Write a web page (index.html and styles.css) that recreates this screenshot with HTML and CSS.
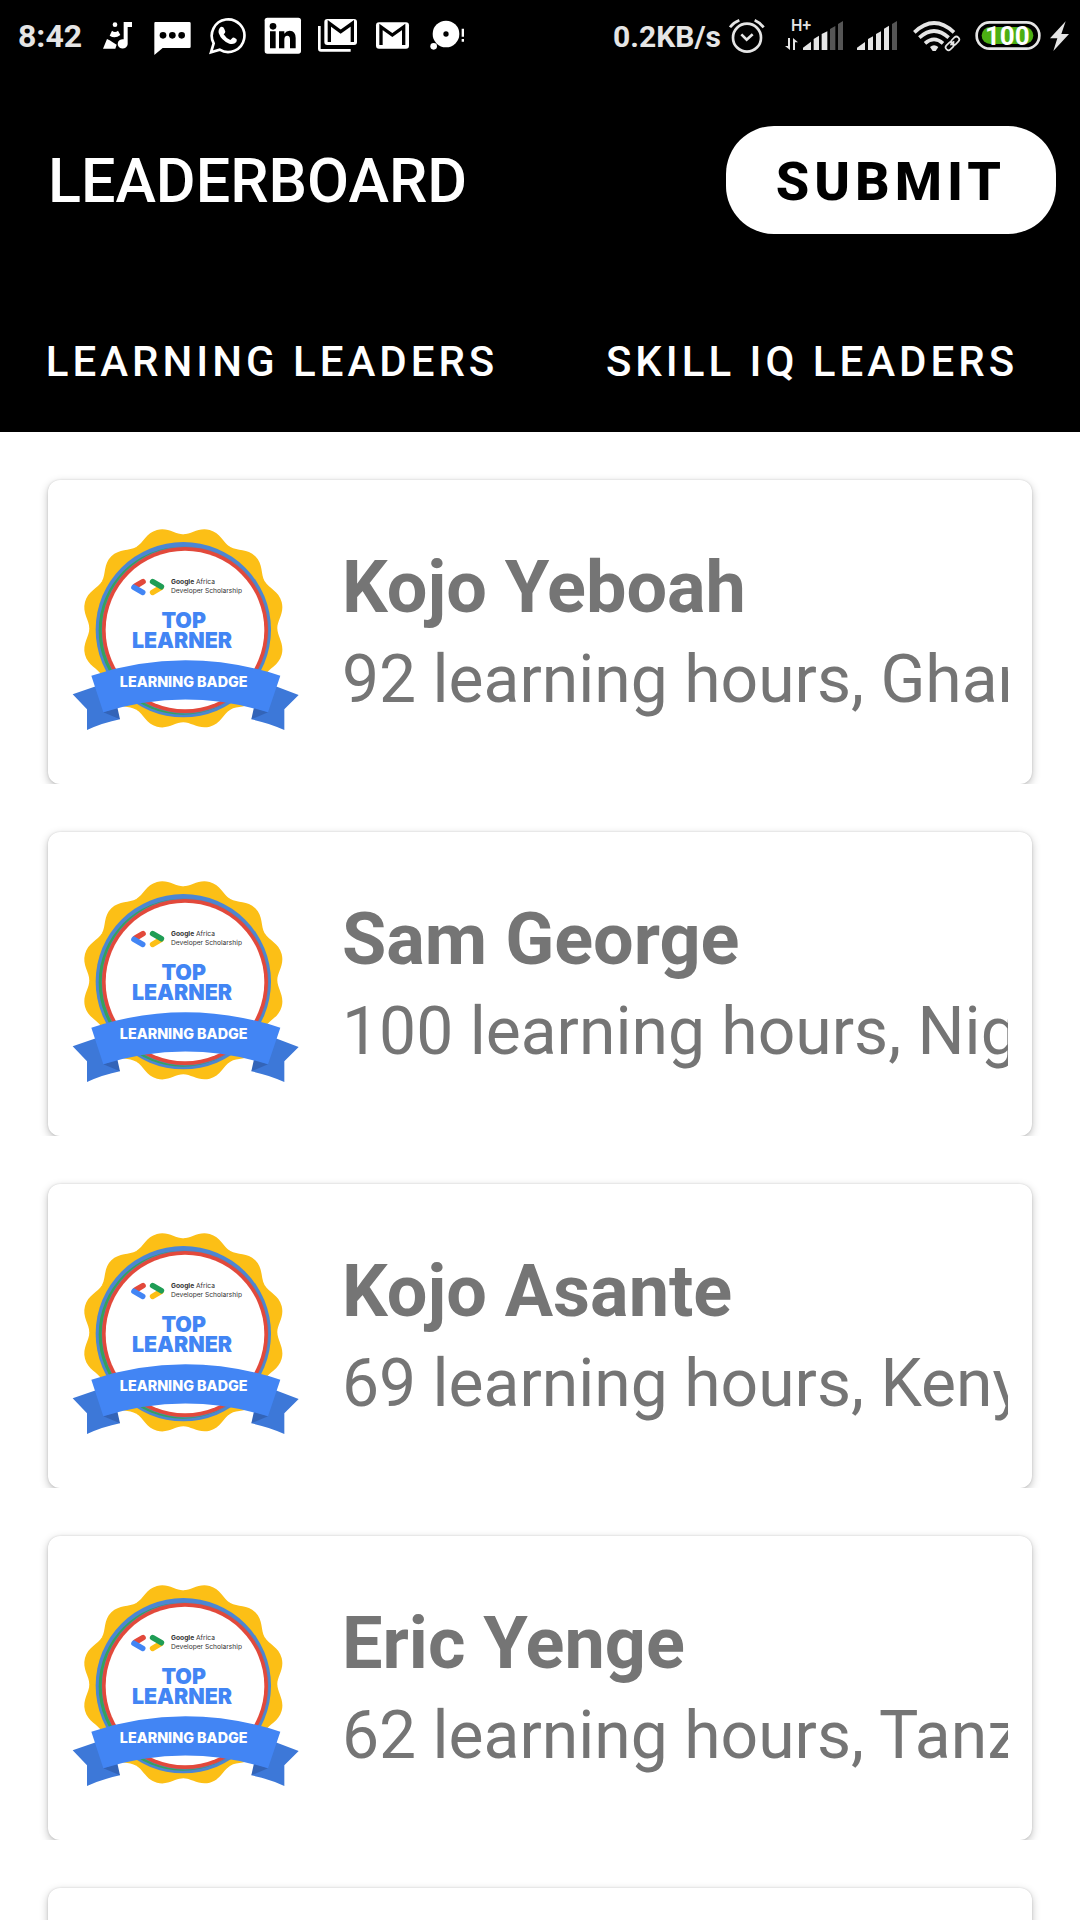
FILE: index.html
```html
<!DOCTYPE html>
<html lang="en">
<head>
<meta charset="utf-8">
<meta name="viewport" content="width=device-width, initial-scale=1">
<title>Leaderboard</title>
<link rel="stylesheet" href="styles.css">
</head>
<body>
<svg class="sprite" aria-hidden="true">
  <defs>
  <g id="badge">
    <g fill="#fcbf16" transform="translate(370 355)">
      <circle r="281"/>
      <path id="petal" d="M0 0V-282C25 -282 46 -304 79 -295C112 -286 119 -257 141 -244Z"/>
      <use href="#petal" transform="rotate(30)"/>
      <use href="#petal" transform="rotate(60)"/>
      <use href="#petal" transform="rotate(90)"/>
      <use href="#petal" transform="rotate(120)"/>
      <use href="#petal" transform="rotate(150)"/>
      <use href="#petal" transform="rotate(180)"/>
      <use href="#petal" transform="rotate(210)"/>
      <use href="#petal" transform="rotate(240)"/>
      <use href="#petal" transform="rotate(270)"/>
      <use href="#petal" transform="rotate(300)"/>
      <use href="#petal" transform="rotate(330)"/>
    </g>
    <circle cx="370" cy="359" r="263" fill="#4c86d3"/>
    <circle cx="368" cy="362" r="252" fill="#36a25b"/>
    <circle cx="376" cy="360" r="251" fill="#5a83b8"/>
    <circle cx="375" cy="360" r="249" fill="#e2493b"/>
    <circle cx="375" cy="360" r="238" fill="#fff"/>
    <g fill="none" stroke-width="17" stroke-linecap="round">
      <path d="M227 228L249 215" stroke="#e2493b"/>
      <path d="M222 232L248 247" stroke="#4285f4"/>
      <path d="M278 247L302 233" stroke="#fcbf16"/>
      <path d="M278 215L304 230" stroke="#1f9d55"/>
    </g>
    <path d="M38 553L110 528L180 628Q130 638 81 660V598Z" fill="#3d78d8"/>
    <path d="M716 555L645 528L574 628Q625 638 673 660V598Z" fill="#3d78d8"/>
    <path d="M130 607L172 592L180 628ZM624 607L582 592L574 628Z" fill="#3364b8"/>
    <path d="M94 497Q375 405 661 497L624 607Q375 530 130 607Z" fill="#4285f4"/>
  </g>
  </defs>
</svg>

<div class="app">
  <header class="top">
    <div class="status">
      <div class="notices">
        <time class="clock">8:42</time>
        <svg width="40" height="40" viewBox="291 48 120 120" fill="#fff">
          <path d="M371 66H396V81H383V133A15 14 0 1 1 371 118Z"/>
          <circle cx="345" cy="74" r="7"/>
          <path d="M336 92Q345 100 354 92L361 105Q345 117 329 107ZM321 117Q331 121 338 127L350 134L346 146H309Z"/>
        </svg>
        <svg width="40" height="40" viewBox="456 48 120 120">
          <path d="M466 66H568Q572 66 572 70V140Q572 144 568 144H488L463 165V69Q463 66 466 66Z" fill="#fff"/>
          <circle cx="489" cy="106" r="10"/><circle cx="517" cy="106" r="10"/><circle cx="545" cy="106" r="10"/>
        </svg>
        <svg width="40" height="40" viewBox="621 48 120 120">
          <path d="M633 157L641 130A49 49 0 1 1 659 149Z" fill="none" stroke="#fff" stroke-width="8"/>
          <path d="M662 81Q670 79 673 87L676 95Q676 99 671 103Q679 116 691 120L698 113Q701 112 709 117Q712 119 709 126Q702 135 688 131Q664 122 656 99Q654 88 662 81Z" fill="#fff"/>
        </svg>
        <svg width="40" height="40" viewBox="36 48 120 120">
          <rect x="44" y="53" width="109" height="108" rx="8" fill="#fff"/>
          <circle cx="69" cy="79" r="10"/>
          <path d="M60 94H77V145H60ZM87 94H103V101Q109 92 119 92Q137 93 137 114V145H120V118Q120 107 112 107Q103 107 103 119V145H87Z"/>
        </svg>
        <svg width="40" height="40" viewBox="201 48 120 120">
          <path d="M208 78V146Q208 151 213 151H302" fill="none" stroke="#fff" stroke-width="8"/>
          <rect x="223" y="57" width="98" height="78" rx="9" fill="#fff"/>
          <path d="M238 126V70L272 95L307 70V126" fill="none" stroke="#000" stroke-width="10"/>
        </svg>
        <svg width="40" height="40" viewBox="366 48 120 120">
          <rect x="378" y="67" width="99" height="79" rx="9" fill="#fff"/>
          <path d="M393 135V81L427 105L461 81V135" fill="none" stroke="#000" stroke-width="10"/>
        </svg>
        <svg width="40" height="40" viewBox="531 48 120 120" fill="#fff">
          <circle cx="588" cy="102" r="40"/><circle cx="588" cy="102" r="8" fill="#000"/>
          <circle cx="551" cy="139" r="10"/>
          <path d="M635 86H642V110H635ZM635 117H642V125H635Z"/>
        </svg>
      </div>
      <div class="system">
        <div class="speed">
          <span class="rate">0.2KB/s</span>
          <svg width="45" height="40" viewBox="381 48 135 120" fill="none" stroke="#e5e5e5" stroke-width="8">
            <circle cx="441" cy="113" r="42"/>
            <path d="M424 103L440 119L458 103"/>
            <path d="M390 82Q400 68 418 61M464 61Q480 68 491 82"/>
          </svg>
        </div>
        <svg width="60" height="40" viewBox="552 48 180 120" fill="#e5e5e5">
          <text class="network" x="573" y="94">H+</text>
          <path d="M564 114H570V150L555 138H564ZM579 150V114L594 127H585V150Z"/>
          <path d="M609 150V143L633 125V150ZM641 150V117L657 107V150ZM665 150V102L682 94V150Z"/>
          <path d="M690 150V87L706 78V150ZM714 150V72L729 63V150Z" fill="#555"/>
        </svg>
        <svg width="44" height="40" viewBox="48 48 132 120" fill="#e5e5e5">
          <path d="M51 150V143L75 126V150ZM84 150V117L99 109V150ZM108 150V102L123 94V150ZM132 150V86L147 77V150Z"/>
          <path d="M156 150V72L171 63V150Z" fill="#555"/>
        </svg>
        <svg width="50" height="40" viewBox="216 48 150 120" fill="none" stroke="#e5e5e5" stroke-width="11">
          <path d="M223 97Q282 41 342 97M238 113Q282 73 326 113M255 130Q282 106 309 130"/>
          <path d="M270 141Q282 130 295 141L287 153H278Z" fill="#e5e5e5" stroke="none"/>
          <g transform="rotate(-45 337 130)">
            <path d="M310 120H364V140H310Z" fill="#000" stroke="none"/>
            <rect x="312" y="122" width="27" height="17" rx="8" stroke-width="5"/>
            <rect x="335" y="122" width="27" height="17" rx="8" stroke-width="5"/>
            <path d="M329 130H345" stroke-width="5"/>
          </g>
        </svg>
        <svg width="96" height="40" viewBox="402 48 288 120">
          <rect x="410" y="67" width="188" height="79" rx="39" fill="none" stroke="#e5e5e5" stroke-width="8"/>
          <rect x="425" y="81" width="155" height="51" rx="26" fill="#4caf13"/>
          <text class="charge" x="502" y="134">100</text>
          <path d="M677 64L630 115H652L640 153L687 102H664Z" fill="#e5e5e5"/>
        </svg>
      </div>
    </div>
    <div class="toolbar">
      <h1 class="title">LEADERBOARD</h1>
      <button class="submit" type="button">SUBMIT</button>
    </div>
    <nav class="tabs">
      <a class="tab" href="#learning">LEARNING LEADERS</a>
      <a class="tab" href="#skill">SKILL IQ LEADERS</a>
    </nav>
  </header>
  <main class="list" id="learning">
    <article class="card">
      <svg class="badge" viewBox="36 6 720 720">
        <use href="#badge"/>
        <text class="badge-note" x="333" y="222"><tspan class="badge-bold">Google</tspan> Africa</text>
        <text class="badge-note" x="333" y="249">Developer Scholarship</text>
        <text class="badge-title" x="371" y="354">TOP</text>
        <text class="badge-title" x="366" y="414">LEARNER</text>
        <text class="badge-ribbon" x="371" y="532">LEARNING BADGE</text>
      </svg>
      <div class="info"><h2 class="name">Kojo Yeboah</h2><p class="detail">92 learning hours, Ghana</p></div>
    </article>
    <article class="card">
      <svg class="badge" viewBox="36 6 720 720">
        <use href="#badge"/>
        <text class="badge-note" x="333" y="222"><tspan class="badge-bold">Google</tspan> Africa</text>
        <text class="badge-note" x="333" y="249">Developer Scholarship</text>
        <text class="badge-title" x="371" y="354">TOP</text>
        <text class="badge-title" x="366" y="414">LEARNER</text>
        <text class="badge-ribbon" x="371" y="532">LEARNING BADGE</text>
      </svg>
      <div class="info"><h2 class="name">Sam George</h2><p class="detail">100 learning hours, Nigeria</p></div>
    </article>
    <article class="card">
      <svg class="badge" viewBox="36 6 720 720">
        <use href="#badge"/>
        <text class="badge-note" x="333" y="222"><tspan class="badge-bold">Google</tspan> Africa</text>
        <text class="badge-note" x="333" y="249">Developer Scholarship</text>
        <text class="badge-title" x="371" y="354">TOP</text>
        <text class="badge-title" x="366" y="414">LEARNER</text>
        <text class="badge-ribbon" x="371" y="532">LEARNING BADGE</text>
      </svg>
      <div class="info"><h2 class="name">Kojo Asante</h2><p class="detail">69 learning hours, Kenya</p></div>
    </article>
    <article class="card">
      <svg class="badge" viewBox="36 6 720 720">
        <use href="#badge"/>
        <text class="badge-note" x="333" y="222"><tspan class="badge-bold">Google</tspan> Africa</text>
        <text class="badge-note" x="333" y="249">Developer Scholarship</text>
        <text class="badge-title" x="371" y="354">TOP</text>
        <text class="badge-title" x="366" y="414">LEARNER</text>
        <text class="badge-ribbon" x="371" y="532">LEARNING BADGE</text>
      </svg>
      <div class="info"><h2 class="name">Eric Yenge</h2><p class="detail">62 learning hours, Tanzania</p></div>
    </article>
    <article class="card"></article>
  </main>
</div>
</body>
</html>
```
FILE: styles.css
```css
* {
  box-sizing: border-box;
}

body {
  margin: 0;
  background: #fff;
  font-family: Roboto, "Liberation Sans", sans-serif;
}

.sprite {
  position: absolute;
  width: 0;
  height: 0;
}

.app {
  display: flex;
  flex-direction: column;
  height: 100vh;
  overflow: hidden;
}

.top {
  flex: none;
  background: #000;
  color: #fff;
}

.status {
  display: flex;
  justify-content: space-between;
  height: 72px;
  padding: 0 10px 0 18px;
  color: #e5e5e5;
}

.notices,
.system,
.speed {
  display: flex;
  align-items: center;
}

.notices {
  gap: 15px;
}

.system {
  gap: 12px;
}

.speed {
  gap: 6px;
}

.clock {
  font-size: 32px;
  font-weight: 700;
}

.rate {
  font-size: 30px;
  font-weight: 700;
}

.network {
  font-size: 48px;
  font-weight: 500;
}

.charge {
  fill: #fff;
  font-size: 78px;
  font-weight: 700;
  text-anchor: middle;
}

.toolbar {
  display: flex;
  align-items: center;
  justify-content: space-between;
  height: 216px;
  padding: 0 24px 0 48px;
}

.title {
  margin: 0;
  padding-top: 2px;
  font-size: 61px;
  font-weight: 500;
}

.submit {
  height: 108px;
  padding: 2px 50px 0;
  border: 0;
  border-radius: 48px;
  background: #fff;
  color: #000;
  font-family: inherit;
  font-size: 54px;
  font-weight: 800;
  letter-spacing: 5px;
}

.tabs {
  display: grid;
  grid-template-columns: 1fr 1fr;
  height: 144px;
}

.tab {
  display: flex;
  align-items: center;
  justify-content: center;
  padding: 2px 0 0 4px;
  color: #fff;
  font-size: 42px;
  font-weight: 500;
  letter-spacing: 4px;
  text-decoration: none;
}

.list {
  display: flex;
  flex: 1;
  flex-direction: column;
  gap: 48px;
  min-height: 0;
  padding: 48px 48px 0;
  overflow: hidden;
}

.card {
  display: flex;
  flex: none;
  align-items: center;
  gap: 30px;
  height: 304px;
  padding: 0 24px;
  border-radius: 12px;
  background: #fff;
  box-shadow: 0 3px 8px rgba(0, 0, 0, 0.25), 0 0 2px rgba(0, 0, 0, 0.15);
  clip-path: inset(-12px -12px 0 -12px);
}

.badge {
  flex: none;
  width: 240px;
  height: 240px;
}

.info {
  display: flex;
  flex: 1;
  flex-direction: column;
  gap: 10px;
  min-width: 0;
  overflow: hidden;
  color: #757575;
  white-space: nowrap;
}

.name {
  margin: 0;
  font-size: 72px;
  font-weight: 700;
  line-height: 86px;
}

.detail {
  margin: 0;
  font-size: 66px;
  line-height: 78px;
}

.badge-note {
  fill: #333;
  font-family: Inter, sans-serif;
  font-size: 20px;
}

.badge-bold {
  font-weight: 700;
}

.badge-title {
  fill: #4285f4;
  font-family: Inter, sans-serif;
  font-size: 64px;
  font-weight: 900;
  text-anchor: middle;
}

.badge-ribbon {
  fill: #fff;
  font-family: Inter, sans-serif;
  font-size: 43px;
  font-weight: 800;
  text-anchor: middle;
}
```
